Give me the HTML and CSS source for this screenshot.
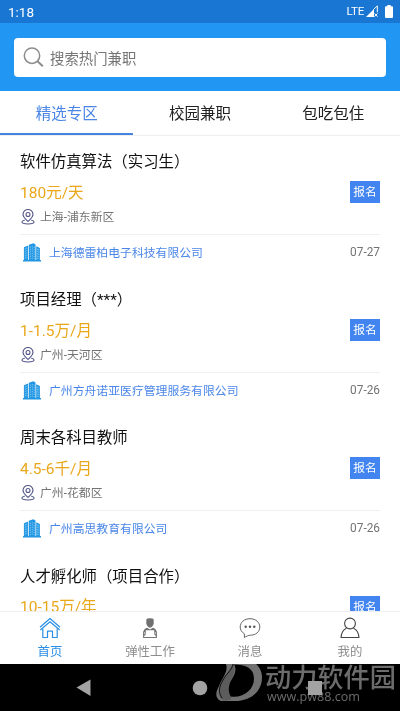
FILE: index.html
```html
<!DOCTYPE html>
<html lang="zh-CN">
<head>
<meta charset="utf-8">
<title>兼职</title>
<link rel="stylesheet" href="styles.css">
</head>
<body>
<svg class="defs" width="0" height="0">
  <symbol id="pin" viewBox="0 0 14 17">
    <g fill="none" stroke="#535786" stroke-width="1.1" stroke-linecap="round">
      <path d="M7 12.400C4.600 9.900 2 8.300 2 5.500a5 5 0 0 1 10 0c0 2.800-2.600 4.400-5 6.900z"/>
      <circle cx="7" cy="5.500" r="2"/>
      <path d="M3.400 11.200C1.800 11.600.9 12.300.9 13.100c0 1.200 2.600 1.900 6.100 1.900s6.100-.7 6.100-1.900c0-.8-.9-1.500-2.500-1.900"/>
    </g>
  </symbol>
  <symbol id="building" viewBox="0 0 18 19">
    <path fill="#2196e3" d="M.9 4.200 5.200 2.400v15H.9zM5.900 1.800 10.300.2l2.200 1.400v15.800H5.900zM13.200 3.200l3.700 1.700v12.500h-3.700zM0 17h18v1.500H0z"/>
    <path stroke="#8fd0f5" stroke-width=".8" stroke-dasharray="1.300 1" d="M2.300 5.200v11M3.900 4.600v11.500M7.400 3.600v12.500M9.300 3v13M11.200 3.600v12.500M14.300 5.500v11M15.700 6v10"/>
  </symbol>
</svg>
<div class="app">
  <header class="status">
    <span class="time">1:18</span>
    <span class="lte">LTE</span>
    <svg class="signal" width="13" height="13" viewBox="0 0 13 13"><path fill="#fff" d="M0 12 8 4v8z"/><path fill="none" stroke="#fff" d="M7.500 4.500 11.300.9v6.400M8.500 8.500l3 3.200m0-3.200-3 3.200"/></svg>
    <svg width="8" height="13" viewBox="0 0 8 13"><path fill="#fff" d="M2.300 0h3.400v1.200H7q1 0 1 1V12q0 1-1 1H1q-1 0-1-1V2.200q0-1 1-1h1.300z"/></svg>
  </header>
  <div class="searchbar">
    <div class="search">
      <svg width="21" height="21" viewBox="0 0 21 21" fill="none" stroke="#8c8c8c" stroke-width="1.500"><circle cx="9" cy="8.700" r="7.700"/><path stroke-width="2" d="m14.500 14.200 5.300 5"/></svg>
      <span>搜索热门兼职</span>
    </div>
  </div>
  <nav class="tabs">
    <div class="tab active">精选专区</div>
    <div class="tab">校园兼职</div>
    <div class="tab">包吃包住</div>
  </nav>
  <main class="list">
    <article class="job">
      <h2>软件仿真算法（实习生）</h2>
      <div class="pay"><span>180元/天</span><b>报名</b></div>
      <div class="place"><svg width="14" height="17"><use href="#pin"/></svg>上海-浦东新区</div>
      <div class="firm"><svg width="18" height="19"><use href="#building"/></svg><span>上海德雷柏电子科技有限公司</span><time>07-27</time></div>
    </article>
    <article class="job">
      <h2>项目经理（***）</h2>
      <div class="pay"><span>1-1.5万/月</span><b>报名</b></div>
      <div class="place"><svg width="14" height="17"><use href="#pin"/></svg>广州-天河区</div>
      <div class="firm"><svg width="18" height="19"><use href="#building"/></svg><span>广州方舟诺亚医疗管理服务有限公司</span><time>07-26</time></div>
    </article>
    <article class="job">
      <h2>周末各科目教师</h2>
      <div class="pay"><span>4.5-6千/月</span><b>报名</b></div>
      <div class="place"><svg width="14" height="17"><use href="#pin"/></svg>广州-花都区</div>
      <div class="firm"><svg width="18" height="19"><use href="#building"/></svg><span>广州高思教育有限公司</span><time>07-26</time></div>
    </article>
    <article class="job">
      <h2>人才孵化师（项目合作）</h2>
      <div class="pay"><span>10-15万/年</span><b>报名</b></div>
    </article>
  </main>
  <nav class="bottom">
    <div class="item on">
      <svg width="22" height="22" viewBox="0 0 22 22" fill="none" stroke="#2b8fe6" stroke-width="1.200" stroke-linejoin="round"><path d="M1 10.200 11 1.500l10 8.700M1.300 13 11 4.800l9.700 8.200"/><path d="M3.800 11.500v9h4.700v-6.300h5v6.300h4.700v-9"/></svg>
      <span>首页</span>
    </div>
    <div class="item">
      <svg width="22" height="22" viewBox="0 0 22 22"><path fill="#707070" d="M7.300 2.500Q8 1.300 11 1.300t3.700 1.200v4q-.7 3.500-3.700 4.300-3-.8-3.700-4.300z"/><path fill="#707070" d="M8 10.800 11 12.600l3-1.800q3.200 1 3.600 4.200h-1.800l-.6-1.800H6.800L6.200 15H4.400q.4-3.200 3.600-4.200z"/><path fill="none" stroke="#777" stroke-width="1.100" d="M4.600 14.500v6h12.800v-6M6.200 13.700v3.600l-1.300 1.200M15.800 13.700v3.600l1.300 1.200"/></svg>
      <span>弹性工作</span>
    </div>
    <div class="item">
      <svg width="22" height="22" viewBox="0 0 22 22"><path fill="none" stroke="#666" d="M5.400 20.500v-3.700C2.700 15.200 1.200 12.700 1.200 10c0-4.700 4.200-8.300 9.800-8.300s9.800 3.600 9.800 8.300-4 8.200-9.400 8.200c-2.200.2-3.900 1-6 2.300z"/><g fill="#555"><circle cx="6.700" cy="9.800" r="1.200"/><circle cx="11" cy="9.800" r="1.200"/><circle cx="15.300" cy="9.800" r="1.200"/></g></svg>
      <span>消息</span>
    </div>
    <div class="item">
      <svg width="22" height="22" viewBox="0 0 22 22" fill="none" stroke="#444" stroke-width="1.100"><circle cx="11" cy="6.500" r="5.400"/><path stroke-linejoin="round" d="M7.500 11.200C4 12.700 2.300 15.500 2 20.500h18c-.3-5-2-7.800-5.500-9.300"/></svg>
      <span>我的</span>
    </div>
  </nav>
  <footer class="system">
    <svg width="400" height="47" viewBox="0 0 400 47" fill="#a3a3a3"><path d="M76.500 23.500 90.500 15.500v16.500z"/><circle cx="200" cy="24" r="7.300"/><path d="M308 17h14v14h-14z"/></svg>
  </footer>
  <div class="mark">
    <svg width="50" height="47" viewBox="0 0 50 47"><path fill="#717171" fill-rule="evenodd" d="M8 1.500Q14 .5 25 .5C38 1 47 8 47 19.500 47 34 35 43 20 43H6C1 41 0 36 3 30l7-14q4-8-2-14.500zM19 6.500c3 5 1 10-3 16s-4 12-1 16c14 2 24-7 24-18 0-10-8-14-20-14z"/><path fill="#5c5c5c" d="M18 5c-2 5-7 11-11 17-4 7-5 13-1 19 3 3 12 1 10-2-3-5-3-10 0-17 3-6 5-11 2-17z"/><path fill="none" stroke="#000" stroke-width=".8" d="M18 6c-1 6-7 10-10 16-4 7-5 12-1 18"/></svg>
    <div class="words"><strong>动力软件园</strong><small>www.pw88.com</small></div>
  </div>
</div>
</body>
</html>
```
FILE: styles.css
```css
* { box-sizing: border-box; }
body {
  margin: 0;
  font-family: Roboto, "Noto Sans CJK SC", sans-serif;
  background: #fff;
}
svg { display: block; flex: none; }
.defs { position: absolute; }
.app {
  position: relative;
  width: 400px;
  height: 711px;
  overflow: hidden;
  display: flex;
  flex-direction: column;
  background: #fff;
}
.status {
  height: 23px;
  flex: none;
  display: flex;
  align-items: center;
  padding: 0 7px 0 8px;
  background: #1976d2;
  color: #fff;
}
.time { flex: 1; font-size: 13.5px; line-height: 23px; padding-top: 1px; }
.lte { font-size: 11.5px; line-height: 23px; margin-right: 2px; letter-spacing: -.2px; }
.signal { margin-right: 6px; }
.searchbar {
  height: 68px;
  flex: none;
  padding: 15px 14px 14px;
  background: #2196f3;
}
.search {
  height: 39px;
  display: flex;
  align-items: center;
  gap: 6px;
  padding-left: 9px;
  border-radius: 4px;
  background: #fff;
  color: #757575;
  font-size: 14.4px;
}
.search span { margin-top: -1px; }
.tabs {
  height: 45px;
  flex: none;
  display: flex;
  border-bottom: 1px solid #eee;
}
.tab {
  flex: 1;
  height: 44px;
  line-height: 47px;
  text-align: center;
  font-size: 15.5px;
  color: #222;
}
.tab.active { color: #4a86e8; border-bottom: 2px solid #4683e0; }
.list { flex: 1; min-height: 0; overflow: hidden; padding: 0 20px; }
.job { height: 138.2px; padding-top: 13px; }
.job h2 {
  margin: 0;
  height: 24px;
  line-height: 26px;
  font-size: 15.4px;
  font-weight: 400;
  color: #111;
}
.pay {
  height: 34px;
  padding-top: 2px;
  display: flex;
  align-items: center;
  justify-content: space-between;
  font-size: 15.5px;
  line-height: 24px;
  color: #eaa71a;
}
.pay span { padding-top: 3px; }
.pay b {
  width: 30px;
  height: 22px;
  margin-top: 2px;
  line-height: 22px;
  text-align: center;
  background: #4285f0;
  color: #fff;
  font-size: 11.8px;
  font-weight: 400;
}
.place {
  height: 28px;
  padding: 0 0 7px 1px;
  display: flex;
  align-items: center;
  gap: 5px;
  font-size: 11.85px;
  line-height: 18px;
  color: #737373;
  border-bottom: 1px solid #f0f0f0;
}
.firm {
  height: 34px;
  padding-left: 3px;
  display: flex;
  align-items: center;
  font-size: 11.85px;
  color: #4a86e8;
}
.firm span { flex: 1; padding-left: 8px; margin-top: -2px; }
.firm time { color: #737373; }
.bottom {
  height: 53px;
  flex: none;
  display: flex;
  border-top: 1px solid #eee;
  background: #fff;
}
.item {
  flex: 1;
  display: flex;
  flex-direction: column;
  align-items: center;
  padding-top: 5px;
  font-size: 12.4px;
  line-height: 18px;
  color: #8c8c8c;
}
.item span { padding-top: 4px; }
.item.on { color: #2b8fe6; }
.system { height: 47px; flex: none; background: #000; }
.mark {
  position: absolute;
  left: 215px;
  top: 658px;
  display: flex;
  mix-blend-mode: lighten;
  color: #6c6c6c;
}
.words { display: flex; flex-direction: column; padding-top: 3px; }
.words strong { font-size: 26.2px; line-height: 34px; font-weight: 500; white-space: nowrap; }
.words small { font-family: "Open Sans", sans-serif; font-size: 12.6px; line-height: 12px; padding-left: 2px; margin-top: -4px; }
```
